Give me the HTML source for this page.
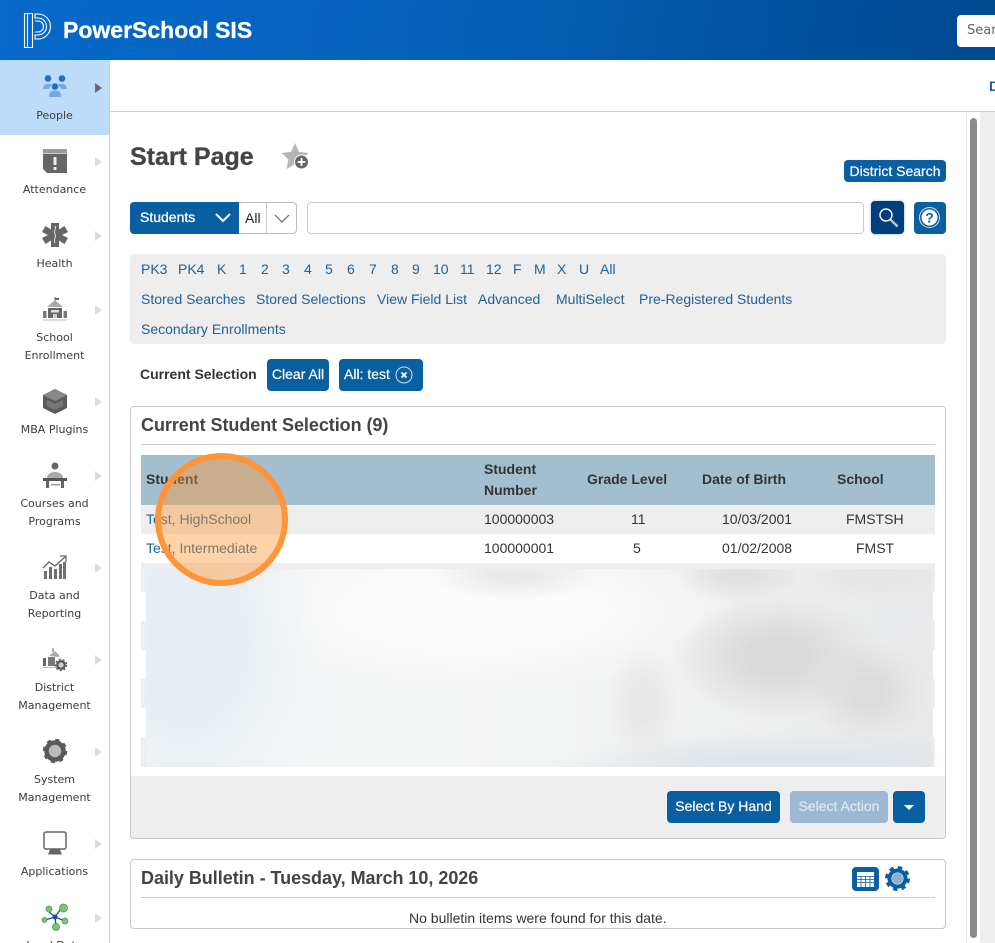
<!DOCTYPE html>
<html><head><meta charset="utf-8"><style>
html,body{margin:0;padding:0;width:995px;height:943px;overflow:hidden;background:#fff}
body{position:relative;font-family:"Liberation Sans",sans-serif;font-size:14px;color:#333}
.t{position:absolute;white-space:nowrap;line-height:18px;height:18px}
.l{color:#1f6198}
.b{font-weight:bold}
.s{position:absolute;left:0;width:109px;text-align:center;font-family:"DejaVu Sans",sans-serif;font-size:11px;line-height:18px;color:#3c3c3c}
.a{position:absolute;left:95px;width:0;height:0;border-left:7px solid #d9dcdf;border-top:5px solid transparent;border-bottom:5px solid transparent}
.i{position:absolute;left:0;top:0}
.btn{position:absolute;background:#0a5fa0;color:#fff;border-radius:4px;text-align:center;font-size:14px;-webkit-text-stroke:.2px currentColor}
.box{position:absolute;left:130px;width:814px;border:1px solid #c8c8c8;border-radius:4px;background:#fff}
</style></head><body>
<div style="position:absolute;left:0;top:0;width:995px;height:60px;background:linear-gradient(100deg,#0769cb 0%,#0560b8 45%,#00498f 100%)"></div>
<svg class="i" width="60" height="60" fill="none" stroke="#fff" stroke-width="1.1"><path d="M24.500 13.500h8v34h-8zM27.500 13.500v34"/><path d="M35 14h3a12.500 12.500 0 0 1 0 25h-3v-4h3a8.500 8.500 0 0 0 0-17h-3z"/><path d="M35 21h3a5.500 5.500 0 0 1 0 11h-3"/></svg>
<div class="t b" style="left:63px;top:16px;font-size:23px;line-height:28px;height:28px;color:#fff;-webkit-text-stroke:.3px #fff">PowerSchool SIS</div>
<div style="position:absolute;left:957px;top:15px;width:50px;height:32px;background:#fff;border-radius:4px"></div>
<div class="t" style="left:967px;top:22px;color:#666;font-family:'DejaVu Sans',sans-serif;font-size:13px">Sear</div>

<div style="position:absolute;left:0;top:60px;width:109px;height:75px;background:#bcdcfa"></div>
<div style="position:absolute;left:109px;top:60px;width:1px;height:883px;background:#cfcfcf"></div>
<div style="position:absolute;left:110px;top:111px;width:885px;height:1px;background:#d0d0d0"></div>
<div class="t b" style="left:989px;top:77px;color:#1f6198">D</div>
<div style="position:absolute;left:966px;top:112px;width:1px;height:831px;background:#e5e5e5"></div>
<div style="position:absolute;left:980px;top:112px;width:15px;height:831px;background:#eee"></div>
<div style="position:absolute;left:970px;top:118px;width:7px;height:820px;background:#8b8b8b;border-radius:4px"></div>

<svg class="i" width="109" height="943">
<g fill="#1f6fc4"><circle cx="48" cy="78.500" r="3.300"/><circle cx="62" cy="78.500" r="3.300"/><circle cx="55" cy="86.500" r="3.300"/></g>
<g fill="#76a8e3"><path d="M43 89c0-3 2-5 5-5s5 1 5 2c-2 0-4 1-4 3zM57 86c0-1 2-2 5-2s5 2 5 5h-6c0-2-2-3-4-3z"/><path d="M49 97c0-5 2-6.500 6-6.500s6 1.500 6 6.500z"/></g>
<rect x="43" y="149" width="24" height="4.500" fill="#9a9a9a"/><path fill="#666" d="M43 154h24v19h-20l-4-4z"/><rect x="53.500" y="157" width="3" height="8" fill="#eee"/><rect x="53.500" y="167" width="3" height="3" fill="#eee"/>
<path fill="#666" d="M51 223h8v6.500l5.500-3.500 3.500 6-6 3 6 3-3.500 6-5.500-3.500v6.500h-8v-6.500l-5.500 3.500-3.500-6 6-3-6-3 3.500-6 5.500 3.500z"/><path d="M55 226c2 3-2 5 0 8s-2 5 0 9" stroke="#ddd" stroke-width="1" fill="none"/>
<path d="M55 297v4" stroke="#666"/><path d="M55 298h4v2h-4z" fill="#666"/><path d="M55 300l8 7H47z" fill="#aaa"/><rect x="48" y="308" width="14" height="10" fill="#666"/><rect x="43" y="311" width="3.500" height="7" fill="#777"/><rect x="63.500" y="311" width="3.500" height="7" fill="#777"/><rect x="51" y="310" width="8" height="2.500" fill="#ddd"/><rect x="53" y="314" width="4" height="4" fill="#ccc"/><rect x="43" y="319.500" width="24" height="1" fill="#bbb"/>
<path fill="#5c5c5c" d="M43 395l12-6 12 6v13l-12 6-12-6z"/><path fill="#888" d="M55 389l12 6-12 6-12-6z"/><path fill="#777" d="M47 400l8 4 8-4v6l-8 4-8-4z"/>
<circle cx="55" cy="466" r="3.500" fill="#666"/><path fill="#aaa" d="M47 478c0-8 16-8 16 0z"/><rect x="43" y="478" width="24" height="3" fill="#555"/><rect x="46" y="481" width="3" height="7" fill="#666"/><rect x="61" y="481" width="3" height="7" fill="#666"/><rect x="51" y="484" width="9" height="1.500" fill="#999"/>
<g fill="#707070"><rect x="44" y="571" width="3" height="8"/><rect x="49" y="567" width="3" height="12"/><rect x="54" y="569" width="3" height="10"/><rect x="59" y="564" width="3" height="15"/><rect x="63" y="562" width="3" height="17"/></g><path d="M43 568l6-6 6 4 10-9M60 556h6v6" fill="none" stroke="#666" stroke-width="1.300"/>
<path fill="#aaa" d="M49 656l6-5 4 4v2z"/><path d="M53 648v4" stroke="#666"/><rect x="43" y="658" width="3" height="8" fill="#666"/><rect x="48" y="657" width="7" height="9" fill="#777"/><rect x="43" y="667" width="14" height="1" fill="#bbb"/><circle cx="61" cy="665" r="3.800" fill="#ccc" stroke="#555" stroke-width="2.200"/><circle cx="61" cy="665" r="5.600" fill="none" stroke="#555" stroke-width="1.200" stroke-dasharray="2 2"/>
<circle cx="55" cy="751" r="8.500" fill="#bbb" stroke="#5a5a5a" stroke-width="4.500"/><circle cx="55" cy="751" r="11" fill="none" stroke="#5a5a5a" stroke-width="2.500" stroke-dasharray="4 4.640"/>
<rect x="44" y="832" width="22" height="17" rx="2" fill="none" stroke="#666" stroke-width="1.500"/><path fill="#666" d="M50 849.500h10l2 5H48z"/>
<g stroke="#1c4f99" stroke-width="1.300"><path d="M55 917L47 910M55 917L63 906M55 917L65 921M55 917L56 926M55 917L45 920"/></g><g fill="#7cc576" stroke="#4c8f4a" stroke-width=".7"><circle cx="49" cy="909" r="3"/><circle cx="63.500" cy="908" r="4"/><circle cx="65" cy="921" r="3"/><circle cx="56" cy="927" r="3.500"/><circle cx="44.500" cy="920" r="2.500"/></g><circle cx="55" cy="917" r="2.500" fill="#1c4f99"/>
</svg>
<div class="a" style="top:83px;border-left-color:#667"></div><div class="a" style="top:157px"></div><div class="a" style="top:231px"></div><div class="a" style="top:305px"></div><div class="a" style="top:397px"></div><div class="a" style="top:471px"></div><div class="a" style="top:563px"></div><div class="a" style="top:655px"></div><div class="a" style="top:747px"></div><div class="a" style="top:839px"></div><div class="a" style="top:913px"></div>
<div class="s" style="top:107px">People</div>
<div class="s" style="top:181px">Attendance</div>
<div class="s" style="top:255px">Health</div>
<div class="s" style="top:329px">School<br>Enrollment</div>
<div class="s" style="top:421px">MBA Plugins</div>
<div class="s" style="top:495px">Courses and<br>Programs</div>
<div class="s" style="top:587px">Data and<br>Reporting</div>
<div class="s" style="top:679px">District<br>Management</div>
<div class="s" style="top:771px">System<br>Management</div>
<div class="s" style="top:863px">Applications</div>
<div class="s" style="top:937px">Load Data</div>

<div class="t b" style="left:130px;top:142px;font-size:25px;line-height:30px;height:30px;color:#444;-webkit-text-stroke:.3px #444">Start Page</div>
<svg class="i" style="left:280px;top:141px" width="32" height="30"><path fill="#b5b5b5" d="M15 2l4 9 9.500 1-7 6.500 2 9.500-8.500-5-8.500 5 2-9.500-7-6.500 9.500-1z"/><circle cx="21.500" cy="21" r="7" fill="#666" stroke="#fff" stroke-width="1"/><path d="M17.500 21h8M21.500 17v8" stroke="#fff" stroke-width="1.800"/></svg>
<div class="btn" style="left:844px;top:160px;width:102px;height:22px;line-height:22px">District Search</div>

<div class="btn" style="left:130px;top:202px;width:109px;height:32px;border-radius:4px 0 0 4px"></div>
<div class="t" style="left:140px;top:208px;color:#fff;font-size:14px;-webkit-text-stroke:.3px #fff">Students</div>
<svg class="i" style="left:214px;top:212px" width="18" height="12"><path d="M2 2l7 7 7-7" fill="none" stroke="#fff" stroke-width="2"/></svg>
<div style="position:absolute;left:239px;top:202px;width:57px;height:30px;border:1px solid #bbb;border-left:0;border-radius:0 4px 4px 0;background:#fff"></div>
<div style="position:absolute;left:266px;top:203px;width:1px;height:30px;background:#ccc"></div>
<div class="t" style="left:245px;top:209px;color:#222">All</div>
<svg class="i" style="left:273px;top:213px" width="18" height="12"><path d="M2 2l7 7 7-7" fill="none" stroke="#666" stroke-width="1.200"/></svg>
<div style="position:absolute;left:307px;top:202px;width:555px;height:30px;border:1px solid #ccc;border-radius:4px;background:#fff"></div>
<div style="position:absolute;left:871px;top:201px;width:33px;height:33px;background:#003f7c;border-radius:4px;box-shadow:0 0 2px #6db3e8"></div>
<svg class="i" style="left:871px;top:201px" width="33" height="33"><circle cx="15" cy="14" r="6" fill="none" stroke="#fff" stroke-width="1.400"/><path d="M19.500 18.500l7 7" stroke="#b9c6d2" stroke-width="2.500"/></svg>
<div class="btn" style="left:914px;top:202px;width:32px;height:32px"></div>
<svg class="i" style="left:914px;top:202px" width="32" height="32"><circle cx="15.500" cy="15.500" r="10" fill="none" stroke="#cfe0ee" stroke-width="1"/><circle cx="15.500" cy="15.500" r="8" fill="#fff"/><text x="15.500" y="20.500" text-anchor="middle" font-family="Liberation Sans" font-weight="bold" font-size="14" fill="#0a5fa0">?</text></svg>

<div style="position:absolute;left:130px;top:254px;width:816px;height:90px;background:#eee;border-radius:4px"></div>
<div class="t l" style="left:141px;top:260px">PK3</div><div class="t l" style="left:178px;top:260px">PK4</div><div class="t l" style="left:217px;top:260px">K</div><div class="t l" style="left:239px;top:260px">1</div><div class="t l" style="left:261px;top:260px">2</div><div class="t l" style="left:282px;top:260px">3</div><div class="t l" style="left:304px;top:260px">4</div><div class="t l" style="left:325px;top:260px">5</div><div class="t l" style="left:347px;top:260px">6</div><div class="t l" style="left:369px;top:260px">7</div><div class="t l" style="left:391px;top:260px">8</div><div class="t l" style="left:412px;top:260px">9</div><div class="t l" style="left:433px;top:260px">10</div><div class="t l" style="left:460px;top:260px">11</div><div class="t l" style="left:486px;top:260px">12</div><div class="t l" style="left:513px;top:260px">F</div><div class="t l" style="left:534px;top:260px">M</div><div class="t l" style="left:557px;top:260px">X</div><div class="t l" style="left:579px;top:260px">U</div><div class="t l" style="left:600px;top:260px">All</div>
<div class="t l" style="left:141px;top:290px">Stored Searches</div><div class="t l" style="left:256px;top:290px">Stored Selections</div><div class="t l" style="left:377px;top:290px">View Field List</div><div class="t l" style="left:478px;top:290px">Advanced</div><div class="t l" style="left:556px;top:290px">MultiSelect</div><div class="t l" style="left:639px;top:290px">Pre-Registered Students</div>
<div class="t l" style="left:141px;top:320px">Secondary Enrollments</div>

<div class="t b" style="left:140px;top:365px;color:#333">Current Selection</div>
<div class="btn" style="left:267px;top:359px;width:62px;height:32px;line-height:30px">Clear All</div>
<div class="btn" style="left:339px;top:359px;width:84px;height:32px;line-height:30px;text-align:left;text-indent:5px">All: test</div>
<svg class="i" style="left:394px;top:365px" width="20" height="20"><circle cx="10" cy="10" r="8" fill="none" stroke="#cfe0ee" stroke-width="1"/><path d="M7.500 7.500l5 5M12.500 7.500l-5 5" stroke="#fff" stroke-width="1.800"/></svg>

<div class="box" style="top:406px;height:431px"></div>
<div class="t b" style="left:141px;top:414px;font-size:18px;line-height:22px;height:22px;color:#444;letter-spacing:-.06px">Current Student Selection (9)</div>
<div style="position:absolute;left:141px;top:444px;width:794px;height:1px;background:#ccc"></div>
<div style="position:absolute;left:141px;top:455px;width:794px;height:50px;background:#a3bfcf"></div>
<div class="t b" style="left:146px;top:470px">Student</div>
<div class="t b" style="left:484px;top:459px;line-height:21px;height:42px">Student<br>Number</div>
<div class="t b" style="left:587px;top:470px">Grade Level</div>
<div class="t b" style="left:702px;top:470px">Date of Birth</div>
<div class="t b" style="left:837px;top:470px">School</div>
<div style="position:absolute;left:141px;top:505px;width:794px;height:29px;background:#eee"></div>
<div class="t l" style="left:146px;top:510px">Test, HighSchool</div>
<div class="t" style="left:484px;top:510px">100000003</div><div class="t" style="left:631px;top:510px">11</div><div class="t" style="left:722px;top:510px">10/03/2001</div><div class="t" style="left:846px;top:510px">FMSTSH</div>
<div class="t l" style="left:146px;top:539px">Test, Intermediate</div>
<div class="t" style="left:484px;top:539px">100000001</div><div class="t" style="left:633px;top:539px">5</div><div class="t" style="left:722px;top:539px">01/02/2008</div><div class="t" style="left:856px;top:539px">FMST</div>

<div style="position:absolute;left:141px;top:563px;width:794px;height:29px;background:#eee"></div>
<div style="position:absolute;left:141px;top:621px;width:794px;height:29px;background:#eee"></div>
<div style="position:absolute;left:141px;top:679px;width:794px;height:29px;background:#eee"></div>
<div style="position:absolute;left:141px;top:737px;width:794px;height:30px;background:#eee"></div>
<div style="position:absolute;left:146px;top:569px;width:787px;height:198px;background:
radial-gradient(ellipse 105px 62px at 632px 88px,#dadada 30%,rgba(218,218,218,0)),
radial-gradient(ellipse 60px 52px at 722px 123px,#dcdcdc 25%,rgba(220,220,220,0)),
radial-gradient(ellipse 65px 28px at 594px 6px,#e1e1e1 25%,rgba(225,225,225,0)),
radial-gradient(ellipse 85px 26px at 369px 6px,#eaeaea 25%,rgba(234,234,234,0)),
radial-gradient(ellipse 75px 26px at 730px 6px,#e6e6e6 25%,rgba(230,230,230,0)),
radial-gradient(ellipse 38px 58px at 497px 136px,#e8e8e8 25%,rgba(232,232,232,0)),
radial-gradient(ellipse 240px 36px at 644px 198px,#dde4ea 25%,rgba(221,228,234,0)),
radial-gradient(ellipse 135px 190px at 40px 71px,#e6eef3 35%,rgba(230,238,243,0)),
radial-gradient(ellipse 260px 80px at 334px 41px,#fbfbfb 40%,rgba(251,251,251,0)),
linear-gradient(90deg,#f3f5f6 0,#f4f5f5 40%,#f0f1f1 65%,#e9eaeb 100%)"></div>

<div style="position:absolute;left:131px;top:776px;width:814px;height:62px;background:#eee;border-radius:0 0 4px 4px"></div>
<div class="btn" style="left:667px;top:791px;width:113px;height:32px;line-height:30px">Select By Hand</div>
<div class="btn" style="left:790px;top:791px;width:98px;height:32px;line-height:30px;background:#9cb8d2;color:#dfe8f0">Select Action</div>
<div class="btn" style="left:893px;top:791px;width:32px;height:32px"></div>
<div style="position:absolute;left:904px;top:805px;width:0;height:0;border-top:5px solid #fff;border-left:5px solid transparent;border-right:5px solid transparent"></div>

<div class="box" style="top:859px;height:68px"></div>
<div class="t b" style="left:141px;top:867px;font-size:18px;line-height:22px;height:22px;color:#444;letter-spacing:-.03px">Daily Bulletin - Tuesday, March 10, 2026</div>
<div style="position:absolute;left:141px;top:897px;width:794px;height:1px;background:#ccc"></div>
<div class="t" style="left:409px;top:909px;color:#333">No bulletin items were found for this date.</div>
<div class="btn" style="left:852px;top:867px;width:27px;height:24px"></div>
<svg class="i" style="left:852px;top:867px" width="27" height="24"><rect x="5" y="5" width="17" height="15" fill="#fff"/><path d="M5 9.500h17M5 12.500h17M5 15.500h17M9 9v11M13.500 9v11M18 9v11" stroke="#0a5fa0" stroke-width=".8"/></svg>
<svg class="i" style="left:884px;top:865px" width="27" height="27"><circle cx="13.500" cy="13.500" r="8" fill="none" stroke="#0a5fa0" stroke-width="4"/><circle cx="13.500" cy="13.500" r="11" fill="none" stroke="#0a5fa0" stroke-width="3" stroke-dasharray="4.400 4.240"/><circle cx="13.500" cy="13.500" r="5.500" fill="#90aed0"/></svg>

<div style="position:absolute;left:155px;top:453px;width:133px;height:133px;box-sizing:border-box;border-radius:50%;border:6.500px solid #ff9438;background:rgba(255,150,50,.42)"></div>
</body></html>
